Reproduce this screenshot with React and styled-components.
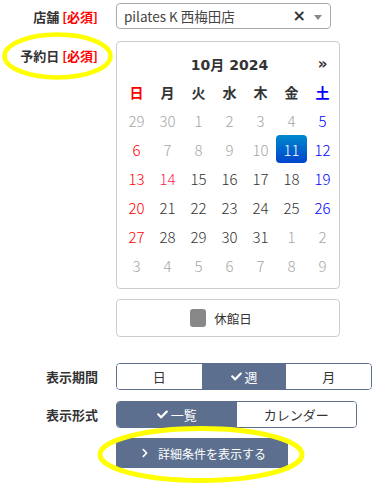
import React from "react";
import styled, { createGlobalStyle } from "styled-components";
import { FaCheck, FaChevronRight } from "react-icons/fa";

const GlobalStyle = createGlobalStyle`
  html, body {
    margin: 0;
    padding: 0;
    background: #ffffff;
  }
  body {
    font-family: "DejaVu Sans", "Noto Sans CJK JP", sans-serif;
    color: #333333;
  }
`;

const weekdays = ["日", "月", "火", "水", "木", "金", "土"];

// each cell: [day, kind]
const weeks = [
  [[29, "off"], [30, "off"], [1, "off"], [2, "off"], [3, "off"], [4, "off"], [5, "sat"]],
  [[6, "sun"], [7, "off"], [8, "off"], [9, "off"], [10, "off"], [11, "active"], [12, "sat"]],
  [[13, "sun"], [14, "holiday"], [15], [16], [17], [18], [19, "sat"]],
  [[20, "sun"], [21], [22], [23], [24], [25], [26, "sat"]],
  [[27, "sun"], [28], [29], [30], [31], [1, "off"], [2, "off"]],
  [[3, "off"], [4, "off"], [5, "off"], [6, "off"], [7, "off"], [8, "off"], [9, "off"]],
];

const dayColors = {
  off: "#a6a6a6",
  sun: "#ff0000",
  holiday: "#ff2255",
  sat: "#0000ff",
  active: "#ffffff",
};

const App = () => {
  return (
    <Page>
      <GlobalStyle />
      <Form>
        <Row $align="center">
          <Label>
            店舗 <Required>[必須]</Required>
          </Label>
          <Select>
            <SelectText>pilates K 西梅田店</SelectText>
            <SelectClear>×</SelectClear>
            <SelectArrow />
          </Select>
        </Row>

        <Row $mt={12}>
          <Label $pt={6}>
            予約日 <Required>[必須]</Required>
          </Label>
          <Calendar>
            <CalHead>
              <span />
              <CalTitle>10月 2024</CalTitle>
              <CalNext>»</CalNext>
            </CalHead>
            <CalGrid>
              {weekdays.map((w, i) => (
                <WeekDay key={w} $color={i === 0 ? "#ff0000" : i === 6 ? "#0000ff" : "#333333"}>
                  {w}
                </WeekDay>
              ))}
            </CalGrid>
            <CalGrid>
              {weeks.flat().map(([d, kind], i) => (
                <Day key={i} $kind={kind}>
                  {d}
                </Day>
              ))}
            </CalGrid>
          </Calendar>
        </Row>

        <Row $mt={10}>
          <span />
          <Legend>
            <LegendSwatch />
            <span>休館日</span>
          </Legend>
        </Row>

        <Row $mt={26} $align="center">
          <Label>表示期間</Label>
          <Toggle $width={256}>
            <ToggleBtn>日</ToggleBtn>
            <ToggleBtn $on>
              <FaCheck size={11} /> 週
            </ToggleBtn>
            <ToggleBtn>月</ToggleBtn>
          </Toggle>
        </Row>

        <Row $mt={11} $align="center">
          <Label>表示形式</Label>
          <Toggle $width={241}>
            <ToggleBtn $on>
              <FaCheck size={11} /> 一覧
            </ToggleBtn>
            <ToggleBtn>カレンダー</ToggleBtn>
          </Toggle>
        </Row>

        <Row $mt={10}>
          <span />
          <DetailButton>
            <FaChevronRight size={10} />
            詳細条件を表示する
          </DetailButton>
        </Row>
      </Form>

      <Marker viewBox="0 0 391 489" width="391" height="489">
        <ellipse cx="57.5" cy="56" rx="53" ry="21.5" fill="none" stroke="#ffff00" strokeWidth="4.5" />
        <ellipse cx="201" cy="454.5" rx="101" ry="26" fill="none" stroke="#ffff00" strokeWidth="5" />
      </Marker>
    </Page>
  );
};

export default App;

const Page = styled.div`
  position: relative;
  width: 391px;
  height: 489px;
  overflow: hidden;
  padding-top: 3px;
  box-sizing: border-box;
`;

const Form = styled.div`
  display: flex;
  flex-direction: column;
`;

const Row = styled.div`
  display: grid;
  grid-template-columns: 98px auto;
  column-gap: 18px;
  justify-content: start;
  align-items: ${(p) => p.$align || "start"};
  margin-top: ${(p) => p.$mt || 0}px;
`;

const Label = styled.div`
  text-align: right;
  font-family: "Noto Sans CJK JP", sans-serif;
  font-size: 13px;
  font-weight: 700;
  line-height: 17px;
  color: #333333;
  padding-top: ${(p) => p.$pt || 0}px;
  white-space: nowrap;
`;

const Required = styled.span`
  color: #ff0000;
`;

const Select = styled.div`
  position: relative;
  width: 215px;
  height: 26px;
  box-sizing: border-box;
  border: 1px solid #aaaaaa;
  border-radius: 4px;
  display: flex;
  align-items: center;
  padding: 0 8px 0 7px;
`;

const SelectText = styled.span`
  flex: 1;
  font-family: "Noto Sans CJK JP", sans-serif;
  font-size: 13.5px;
  color: #444444;
`;

const SelectClear = styled.span`
  font-family: "DejaVu Sans", sans-serif;
  font-size: 16px;
  font-weight: 700;
  color: #333333;
  margin-right: 8px;
  line-height: 1;
`;

const SelectArrow = styled.span`
  width: 0;
  height: 0;
  border-left: 4px solid transparent;
  border-right: 4px solid transparent;
  border-top: 5px solid #888888;
  margin-top: 2px;
`;

const Calendar = styled.div`
  width: 224px;
  height: 248px;
  box-sizing: border-box;
  border: 1px solid #cccccc;
  border-radius: 4px;
  padding: 8px 3px 8px 3px;
`;

const CalHead = styled.div`
  display: grid;
  grid-template-columns: 31px 155px 31px;
  height: 28px;
  align-items: center;
  padding-left: 1px;
`;

const CalTitle = styled.div`
  text-align: center;
  font-family: "DejaVu Sans", "Noto Sans CJK JP", sans-serif;
  font-size: 14px;
  font-weight: 700;
  color: #333333;
`;

const CalNext = styled.div`
  text-align: center;
  font-size: 15px;
  font-weight: 700;
  color: #333333;
`;

const CalGrid = styled.div`
  display: grid;
  grid-template-columns: repeat(7, 31px);
  padding-left: 1px;
`;

const WeekDay = styled.div`
  height: 28px;
  display: flex;
  align-items: center;
  justify-content: center;
  font-family: "Noto Sans CJK JP", sans-serif;
  font-size: 14px;
  font-weight: 700;
  color: ${(p) => p.$color};
`;

const Day = styled.div`
  height: 28px;
  margin-bottom: 1px;
  display: flex;
  align-items: center;
  justify-content: center;
  font-family: "Noto Sans CJK JP", sans-serif;
  font-size: 15px;
  font-weight: 300;
  border-radius: 4px;
  color: ${(p) => dayColors[p.$kind] || "#333333"};
  background: ${(p) =>
    p.$kind === "active" ? "linear-gradient(to bottom, #0088cc, #0044cc)" : "transparent"};
`;

const Legend = styled.div`
  width: 224px;
  height: 38px;
  box-sizing: border-box;
  border: 1px solid #cccccc;
  border-radius: 4px;
  display: flex;
  align-items: center;
  justify-content: center;
  gap: 8px;
  padding-right: 14px;
  font-family: "Noto Sans CJK JP", sans-serif;
  font-size: 12.5px;
  color: #333333;
`;

const LegendSwatch = styled.span`
  width: 16px;
  height: 18px;
  border-radius: 3px;
  background: #888888;
`;

const Toggle = styled.div`
  width: ${(p) => p.$width}px;
  height: 27px;
  box-sizing: border-box;
  border: 1px solid #5c6f8e;
  border-radius: 4px;
  overflow: hidden;
  display: flex;
`;

const ToggleBtn = styled.div`
  flex: 1;
  display: flex;
  align-items: center;
  justify-content: center;
  gap: 3px;
  font-family: "Noto Sans CJK JP", sans-serif;
  font-size: 13px;
  color: ${(p) => (p.$on ? "#ffffff" : "#333333")};
  background: ${(p) => (p.$on ? "#5c6f8e" : "#ffffff")};
`;

const DetailButton = styled.button`
  width: 172px;
  height: 30px;
  border: none;
  border-radius: 3px;
  background: #5c6f8e;
  color: #ffffff;
  display: flex;
  align-items: center;
  justify-content: center;
  gap: 8px;
  padding: 0 0 0 2px;
  font-family: "Noto Sans CJK JP", sans-serif;
  font-size: 12px;
  cursor: pointer;
`;

const Marker = styled.svg`
  position: absolute;
  left: 0;
  top: 0;
  pointer-events: none;
`;
